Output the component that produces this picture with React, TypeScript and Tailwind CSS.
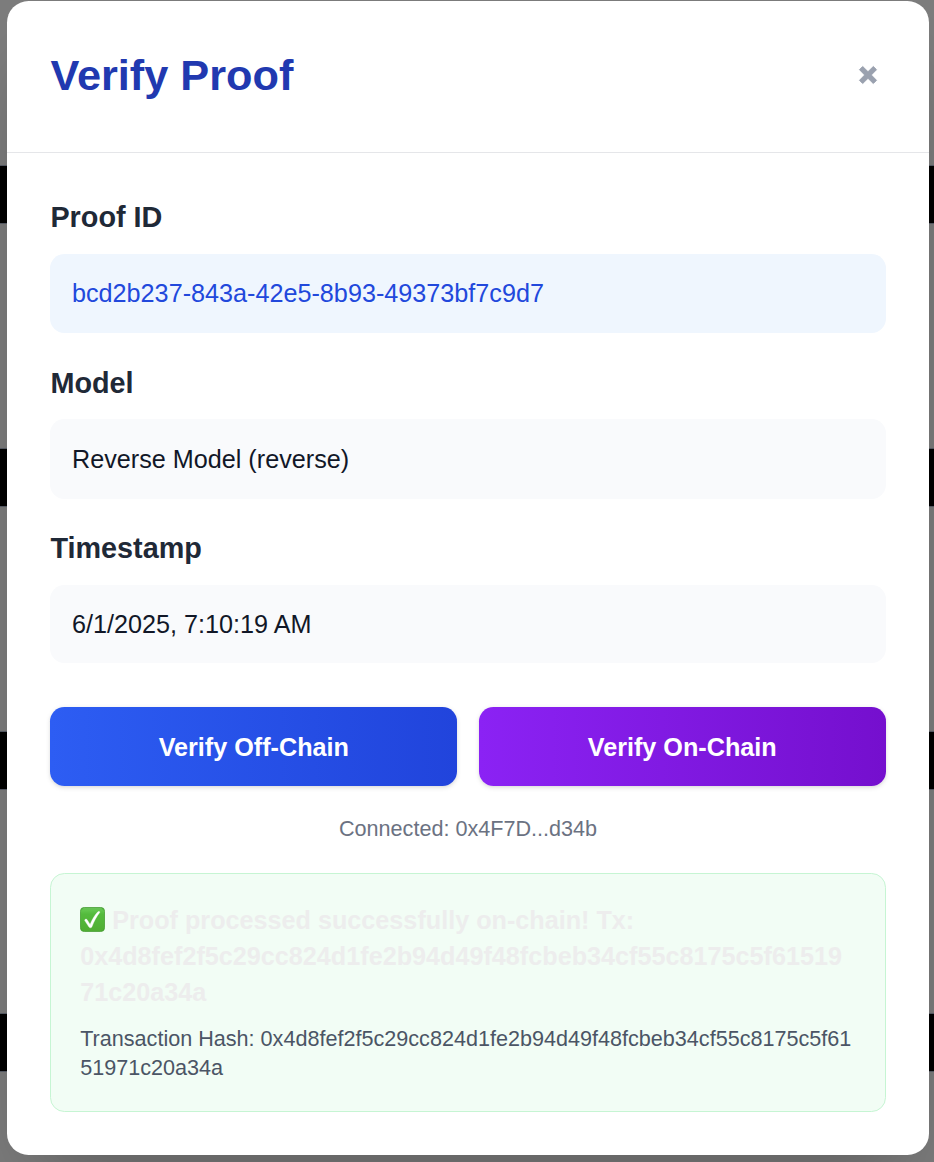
import type { ReactNode } from "react";

const HASH = "0x4d8fef2f5c29cc824d1fe2b94d49f48fcbeb34cf55c8175c5f6151971c20a34a";

function Backdrop() {
  return (
    <div className="flex h-[1162px] w-full flex-col gap-[223.8px] overflow-hidden bg-[#7d7d7d] pt-[165px]">
      {[0, 1, 2, 3].map((row) => (
        <div key={row} className="h-[59px] shrink-0 border-y border-[#5a5f69] bg-black" />
      ))}
    </div>
  );
}

function CloseIcon() {
  return (
    <svg viewBox="0 0 18 18" className="h-[18px] w-[18px] overflow-visible" fill="#9aa1af" stroke="#9aa1af" strokeWidth="1" strokeLinejoin="round">
      <path d="M3.7 0.5 9 5.7 14.3 0.5 17.5 3.7 12.3 9 17.5 14.3 14.3 17.5 9 12.3 3.7 17.5 0.5 14.3 5.7 9 0.5 3.7Z" />
    </svg>
  );
}

function CheckBadge() {
  return (
    <svg viewBox="0 0 25 25" className="mr-[7px] inline-block h-[25px] w-[25px] align-[-3px]">
      <defs>
        <linearGradient id="badge" x1="0" y1="0" x2="0" y2="1">
          <stop offset="0" stopColor="#4bac3b" />
          <stop offset="0.12" stopColor="#62c64d" />
          <stop offset="0.28" stopColor="#54bb3d" />
          <stop offset="1" stopColor="#50ad33" />
        </linearGradient>
      </defs>
      <rect x="0.4" y="0.4" width="24.2" height="24.2" rx="4" fill="url(#badge)" stroke="#439b2e" strokeWidth="0.8" />
      <path d="M3.5 1.8H21.5" stroke="#8fdc7c" strokeWidth="0.9" strokeLinecap="round" opacity="0.5" />
      <path
        d="M4.8 12.9C5.5 11.7 6.6 11.9 7.3 13L10.1 17.4C12.2 12.3 14.7 8.2 17.7 5C18.3 4.3 20.3 4.4 19.7 5.4C16.5 9.5 13.9 14.3 11.8 20C11.4 21 9.6 21 9 20L4.9 13.8C4.7 13.5 4.6 13.2 4.8 12.9Z"
        fill="#fff"
        stroke="#fff"
        strokeWidth="0.4"
      />
    </svg>
  );
}

function Field({ label, tone, children }: { label: string; tone: string; children: ReactNode }) {
  return (
    <div>
      <h3 className="mb-[14.4px] text-[28.8px] leading-[43.2px] font-bold text-[#1f2937]">{label}</h3>
      <p className={`rounded-[14.4px] px-[21.6px] pb-[21.6px] text-[25.2px] leading-[36px] ${tone}`}>{children}</p>
    </div>
  );
}

export default function App() {
  return (
    <div className="relative h-[1162px] w-full overflow-hidden font-['Liberation_Sans',Arial,sans-serif]">
      <Backdrop />
      <div className="absolute inset-0 flex items-start justify-center pt-[0.8px] pl-[2px]">
        <div className="w-[921.6px] rounded-[21.6px] bg-white shadow-[0_45px_90px_-21.6px_rgba(0,0,0,0.25)]">
          <header className="flex items-center justify-between border-b border-[#e5e6e9] px-[43.2px] pt-[42.2px] pb-[44.2px]">
            <h2 className="text-[43.3px] leading-[64.8px] font-bold text-[#2139b0]">Verify Proof</h2>
            <button aria-label="Close" className="mr-[8.5px]">
              <CloseIcon />
            </button>
          </header>
          <main className="px-[43.2px] pt-[43.2px] pb-[42.6px]">
            <div className="flex flex-col gap-[28.8px]">
              <Field label="Proof ID" tone="bg-[#eff6fe] text-[#2148dc] pt-[21.6px]">
                bcd2b237-843a-42e5-8b93-49373bf7c9d7
              </Field>
              <Field label="Model" tone="bg-[#f9fafc] text-[#111727] pt-[21.6px]">
                Reverse Model (reverse)
              </Field>
              <Field label="Timestamp" tone="bg-[#f9fafc] text-[#111727] pt-[20.8px]">
                6/1/2025, 7:10:19 AM
              </Field>
            </div>
            <div className="mt-[44px] grid grid-cols-2 gap-[21.6px] text-[25.2px] leading-[36px] font-bold text-white">
              <button className="rounded-[14.4px] bg-linear-to-r from-[#2d5df3] to-[#2144dc] py-[21.6px] shadow-[0_1.8px_5.4px_rgba(0,0,0,0.1),0_1.8px_3.6px_-1.8px_rgba(0,0,0,0.1)]">
                Verify Off-Chain
              </button>
              <button className="rounded-[14.4px] bg-linear-to-r from-[#8b22f4] to-[#750fce] py-[21.6px] shadow-[0_1.8px_5.4px_rgba(0,0,0,0.1),0_1.8px_3.6px_-1.8px_rgba(0,0,0,0.1)]">
                Verify On-Chain
              </button>
            </div>
            <p className="mt-[28.8px] text-center text-[21.6px] leading-[28.8px] text-[#6b7282]">
              Connected: 0x4F7D...d34b
            </p>
            <section className="mt-[28.8px] rounded-[14.4px] border border-[#c6f5d3] bg-[#f2fdf5] px-[28.8px] pt-[27.8px] pb-[28.8px] break-all">
              <p className="text-[25.2px] leading-[36px] font-bold text-[#ededed]">
                <CheckBadge />
                Proof processed successfully on-chain! Tx: <br />
                {HASH}
              </p>
              <p className="mt-[15.4px] text-[21.6px] leading-[28.8px] text-[#4b5565]">{`Transaction Hash: ${HASH}`}</p>
            </section>
          </main>
        </div>
      </div>
    </div>
  );
}
